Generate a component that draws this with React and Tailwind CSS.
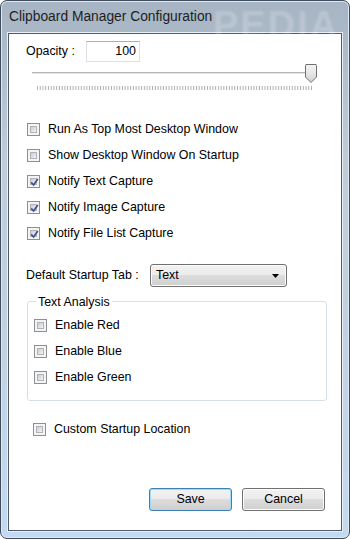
import React from "react";

const font = { fontFamily: '"Liberation Sans", Arial, sans-serif' };

const Check = ({ checked }) => (
  <div className="size-[13px] shrink-0 border border-[#8e8f8f] bg-[#f4f4f4] p-[2px]">
    <div className="relative size-full border border-[#b0b4ba] bg-gradient-to-br from-[#c9ccd1] to-[#f4f4f4]">
      {checked && (
        <svg
          viewBox="0 0 9 9"
          className="absolute -left-[1px] -top-[1px] size-[9px] overflow-visible"
        >
          <path
            d="M1.2 4.4 L3.6 7 L7.8 1"
            fill="none"
            stroke="#3d4f8c"
            strokeWidth="1.7"
          />
        </svg>
      )}
    </div>
  </div>
);

const Row = ({ label, checked, className = "" }) => (
  <div className={`flex h-[26px] items-center gap-[8px] ${className}`}>
    <Check checked={checked} />
    <span className="text-[12.4px] text-black">{label}</span>
  </div>
);

const Slider = () => {
  const ticks = [];
  for (let i = 0; i <= 100; i++) {
    const x = 5.5 + i * 2.74;
    ticks.push(<line key={i} x1={x} y1="0" x2={x} y2="4" stroke="#9a9a9a" strokeWidth="0.8" />);
  }
  return (
    <div className="ml-[23px] mt-[2px] h-[28px] w-[285px]">
      <svg width="285" height="28" viewBox="0 0 285 28">
        <line x1="0" y1="8.5" x2="284" y2="8.5" stroke="#b5b5b5" />
        <line x1="0" y1="9.5" x2="284" y2="9.5" stroke="#e6e6e6" />
        <path
          d="M274.5 0.5 H284.5 Q285 0.5 285 1.5 V13 L279.5 18.5 L274 13 V1.5 Q274 0.5 274.5 0.5 Z"
          transform="translate(-0.5 0)"
          fill="url(#thumb)"
          stroke="#707070"
        />
        <defs>
          <linearGradient id="thumb" x1="0" y1="0" x2="0" y2="1">
            <stop offset="0" stopColor="#f3f3f3" />
            <stop offset="0.5" stopColor="#e6e6e6" />
            <stop offset="1" stopColor="#cfcfcf" />
          </linearGradient>
        </defs>
        <g transform="translate(0 22)">{ticks}</g>
      </svg>
    </div>
  );
};

const Button = ({ children, primary }) => (
  <div
    className={`flex h-[23px] w-[83px] items-center justify-center rounded-[3px] border ${
      primary ? "border-[#3c7fb1] shadow-[inset_0_0_0_1px_#9fdcf7]" : "border-[#707070] shadow-[inset_0_0_0_1px_#fcfcfc]"
    } bg-[linear-gradient(#f2f2f2_0%,#ebebeb_50%,#dddddd_50%,#cfcfcf_100%)] text-[12.4px] text-black`}
  >
    {children}
  </div>
);

export default function App() {
  return (
    <div
      style={font}
      className="relative flex h-[539px] w-[350px] flex-col overflow-hidden rounded-[7px] border border-[#3f4c5b] bg-[linear-gradient(180deg,#a6b4c3_0%,#c0ccd8_30%,#c2d3e4_70%,#c2daf2_100%)] px-[7px] pb-[7px] shadow-[inset_0_0_0_1px_#dfe8f2]"
    >
      <div className="relative flex h-[32px] shrink-0 items-center pl-[1px] pt-[1px]">
        <span className="text-[13.8px] text-[#1e1e1e]">Clipboard Manager Configuration</span>
        <span className="pointer-events-none absolute left-[205px] top-[-4px] select-none text-[38px] font-bold tracking-[2px] text-white/20 blur-[1px]">
          PEDIA
        </span>
      </div>

      <div className="flex flex-1 flex-col border border-[#4f5b69] bg-white shadow-[0_0_0_1px_#e9f0f7]">
        {/* opacity */}
        <div className="mt-[7px] flex items-center pl-[17px]">
          <span className="w-[60px] text-[12.4px] text-black">Opacity :</span>
          <div className="flex h-[21px] w-[54px] items-center justify-end border border-[#dbdfe6] border-t-[#abadb3] pr-[3px] text-[12.4px] text-black">
            100
          </div>
        </div>
        <Slider />

        {/* options */}
        <div className="ml-[18px] mt-[24px] flex flex-col">
          <Row label="Run As Top Most Desktop Window" />
          <Row label="Show Desktop Window On Startup" />
          <Row label="Notify Text Capture" checked />
          <Row label="Notify Image Capture" checked />
          <Row label="Notify File List Capture" checked />
        </div>

        {/* startup tab */}
        <div className="ml-[17px] mt-[18px] flex items-center">
          <span className="w-[124px] text-[12.4px] text-black">Default Startup Tab :</span>
          <div className="flex h-[23px] w-[137px] items-center justify-between rounded-[3px] border border-[#707070] bg-[linear-gradient(#f2f2f2_0%,#ebebeb_50%,#dddddd_50%,#cfcfcf_100%)] pl-[5px] pr-[7px] shadow-[inset_0_0_0_1px_#fcfcfc] text-[12.4px] text-black">
            <span>Text</span>
            <svg width="7" height="4" viewBox="0 0 7 4">
              <path d="M0 0 H7 L3.5 4 Z" fill="#000" />
            </svg>
          </div>
        </div>

        {/* group */}
        <div className="relative ml-[18px] mt-[14px] h-[100px] w-[300px] rounded-[3px] border border-[#d5dfe5]">
          <span className="absolute -top-[9px] left-[8px] bg-white px-[2px] text-[12.4px] text-black">
            Text Analysis
          </span>
          <div className="ml-[6px] mt-[10px] flex flex-col">
            <Row label="Enable Red" />
            <Row label="Enable Blue" />
            <Row label="Enable Green" />
          </div>
        </div>

        <Row label="Custom Startup Location" className="ml-[24px] mt-[15px]" />

        <div className="mt-auto mb-[19px] flex justify-end gap-[10px] pr-[16px]">
          <Button primary>Save</Button>
          <Button>Cancel</Button>
        </div>
      </div>
    </div>
  );
}
